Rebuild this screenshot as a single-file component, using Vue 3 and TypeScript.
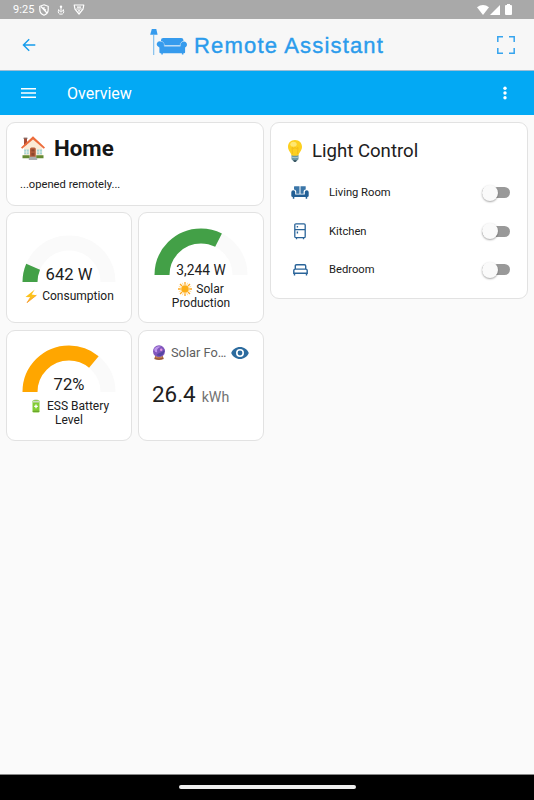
<script setup lang="ts">
interface Gauge {
  id: string
  value: string
  label: string[]
  percent: number
  color: string
}

interface Light {
  name: string
  icon: 'sofa' | 'fridge' | 'bed'
}

const gauges: Gauge[] = [
  { id: 'consumption', value: '642 W', label: ['Consumption'], percent: 12.84, color: '#43a047' },
  { id: 'solar', value: '3,244 W', label: ['Solar', 'Production'], percent: 64.88, color: '#43a047' },
  { id: 'battery', value: '72%', label: ['ESS Battery', 'Level'], percent: 72, color: '#ffa600' },
]

const lights: Light[] = [
  { name: 'Living Room', icon: 'sofa' },
  { name: 'Kitchen', icon: 'fridge' },
  { name: 'Bedroom', icon: 'bed' },
]
</script>

<template>
  <div class="screen">
    <div class="status">
      <span class="time">9:25</span>
      <svg class="st-shield" viewBox="0 0 10 12"><path d="M5 .8 9.2 2.3V5.5C9.2 8.4 7.3 10.4 5 11.2 2.700 10.4.8 8.4.8 5.5V2.3Z" fill="none" stroke="#fff" stroke-width="1.2" /><path d="M2 2.500 8 9M5 3v2.200l2 .8" fill="none" stroke="#fff" stroke-width="1.2" /></svg>
      <svg class="st-dl" viewBox="0 0 8 10"><circle cx="4" cy="1.800" r="1.200" fill="#fff" /><path d="M4 2v4M1.700 4.400Q.2 9.200 4 9.200T6.300 4.400M1.500 5 4 7.200 6.500 5" fill="none" stroke="#fff" stroke-width="1" /></svg>
      <svg class="st-tri" viewBox="0 0 12 11"><path d="M1.200 1H10.800L10 5.200 6 10 2 5.200Z" fill="none" stroke="#fff" stroke-width="1.200" stroke-linejoin="round" /><path d="M4 3.200h4M3.200 5h5.600M5 6.800h2" stroke="#fff" stroke-width="1.200" /></svg>
      <span class="grow"></span>
      <svg class="st-wifi" viewBox="0 0 12 10"><path d="M0 2.200Q6-2.200 12 2.200L6 10Z" fill="#fff" /></svg>
      <svg class="st-cell" viewBox="0 0 10 10"><path d="M10 0V10H0Z" fill="#fff" /></svg>
      <svg class="st-batt" viewBox="0 0 7 11"><path d="M2 0h3v1h1q1 0 1 1v8q0 1-1 1H1q-1 0-1-1V2q0-1 1-1h1Z" fill="#fff" /></svg>
    </div>

    <header class="brandbar">
      <svg class="back" viewBox="0 0 14 14"><path d="M13.300 7H1.500M7.200 1.200 1.400 7l5.800 5.800" fill="none" stroke="#159cec" stroke-width="1.400" /></svg>
      <div class="brand">
        <svg class="logo" viewBox="0 0 38 27">
          <path d="M1.800 0h4.500l1.300 5.800H.2Z" fill="#369bed" />
          <path d="M3.700 6v20" stroke="#79bbed" stroke-width="1.100" />
          <path d="M11 12.300V11q0-2 2.200-2h18q2.200 0 2.200 2v1.300q-3 .3-3 3.400v.5h-16.300v-.5q0-3.100-3.100-3.400Z" fill="#369bed" />
          <path d="M14.300 17.300h16V15.200q1-2.700 3.900-2.600 3.300.8 2.700 4-.6 1.500-1.800 1.800v4.800q0 1.100-1.100 1.100h-.6v1.200h-1.500v-1.200H12.800v1.200h-1.500v-1.200h-.7q-1.200 0-1.200-1.100v-4.800Q6.300 17 6.800 14.600q.8-2.700 4-2.200 2.500.3 3.500 2.700Z" fill="#369bed" />
          <path d="M14.300 14.500v2.600h16v-2.600" fill="none" stroke="#a5d2f6" stroke-width=".7" />
        </svg>
        <span class="brand-name">Remote Assistant</span>
      </div>
      <svg class="full" viewBox="0 0 18 18"><path d="M.8 6V.8H6M12 .8h5.200V6M17.200 12v5.200H12M6 17.200H.8V12" fill="none" stroke="#36a4ee" stroke-width="1.500" /></svg>
    </header>

    <nav class="toolbar">
      <svg class="menu" viewBox="0 0 15 10"><path d="M0 .8h15M0 5h15M0 9.200h15" stroke="#fff" stroke-width="1.500" /></svg>
      <span class="view">Overview</span>
      <svg class="dots" viewBox="0 0 4 14"><circle cx="2" cy="2.200" r="1.700" fill="#fff" /><circle cx="2" cy="7" r="1.700" fill="#fff" /><circle cx="2" cy="11.800" r="1.700" fill="#fff" /></svg>
    </nav>

    <main class="columns">
      <section class="left">
        <article class="card home">
          <h1>
            <svg class="house" viewBox="0 0 24 24">
              <path d="M3 2.200h3v7H3Z" fill="#a84b35" /><path d="M2.600 1.600h3.800V3H2.600Z" fill="#8a6760" />
              <path d="M3 11.500 12 3l9.300 8.500V22H3Z" fill="#fbead6" />
              <path d="M12 .2 24 11.500l-1.200 1.300L12 3.500 1.200 12.800 0 11.500Z" fill="#ed6c3b" />
              <path d="M3.200 13.500h4.600v4.800H3.200ZM16 13.500h5v4.800h-5Z" fill="#a4d5d5" />
              <path d="M5.500 13.500v4.800M3.200 16h4.600M18.500 13.500v4.800M16 16h5" stroke="#f4f1e5" stroke-width=".7" />
              <path d="M9 21v-8q0-1.600 1.500-1.600h2.800q1.500 0 1.500 1.600v8Z" fill="#b65f3d" />
              <path d="M10.400 13.200h3v2.400h-3ZM10.400 16.800h3v3h-3Z" fill="#8e472f" />
              <path d="M1.500 19.300h7.200v2.900H1.500ZM15.200 19.300h7.300v2.900h-7.300Z" fill="#648a32" />
              <path d="M8.800 20.700h6.400v1.400h1v1.900H7.800v-1.900h1Z" fill="#a9adb0" />
            </svg>
            <span>Home</span>
          </h1>
          <p>...opened remotely...</p>
        </article>

        <div class="grid">
          <article v-for="g in gauges" :key="g.id" class="card gauge-card" :class="g.id">
            <div class="gauge">
              <svg class="dial" viewBox="0 0 94 47">
                <path d="M8 47A39 39 0 0 1 86 47" fill="none" stroke="#fafafa" stroke-width="15" />
                <path d="M8 47A39 39 0 0 1 86 47" fill="none" :stroke="g.color" stroke-width="15" pathLength="100" :stroke-dasharray="`${g.percent} 200`" />
              </svg>
              <span class="value">{{ g.value }}</span>
            </div>
            <div class="label">
              <div v-for="(line, i) in g.label" :key="line" class="line">
                <template v-if="i === 0">
                  <svg v-if="g.id === 'consumption'" class="emoji" viewBox="0 0 14 14"><path d="M10.800.5 1.500 8l5 .3L3 13.700 12.500 6.200l-4.800-.6Z" fill="#fcc21b" /><path d="M6.500 8.300 3 13.700 12.500 6.200" fill="none" stroke="#f79422" stroke-width=".7" /></svg>
                  <svg v-else-if="g.id === 'solar'" class="emoji" viewBox="0 0 14 14"><path d="M7 0v14M0 7h14M2 2l10 10M12 2 2 12" stroke="#ffa81f" stroke-width="1.300" /><path d="M4.300.8l5.400 12.400M9.700.8 4.300 13.200M.8 4.300l12.400 5.400M13.200 4.300.8 9.700" stroke="#ffc95c" stroke-width=".6" /><circle cx="7" cy="7" r="4.300" fill="#fff" /><circle cx="7" cy="7" r="3.800" fill="#fcae18" /></svg>
                  <svg v-else class="emoji" viewBox="0 0 14 14"><path d="M5.300.6h3.400v1.200H5.300Z" fill="#b8bfb7" /><rect x="3.500" y="1.300" width="7" height="12.200" rx="1.200" fill="#83cd35" /><path d="M4 2h6v1.500H4Z" fill="#cdd7c4" /><path d="M3.800 11.800h6.400v1H3.800Z" fill="#659b2c" /><path d="M7 5.600v3.600M5.200 7.400h3.600" stroke="#fff" stroke-width="1.300" /></svg>
                </template>
                <span>{{ line }}</span>
              </div>
            </div>
          </article>

          <article class="card forecast">
            <div class="fc-head">
              <svg class="orb" viewBox="0 0 14 15"><circle cx="7" cy="6.300" r="6" fill="#8056bd" /><path d="M2.200 3.800Q5-.1 9 1.800 3.800 3.800 5.300 7 2.400 8 2.200 3.800Z" fill="#bd95ea" /><path d="M7 8q4.200-.4 5.300-4 .8 4.900-3 6.700Q6.200 11.400 4.500 10Z" fill="#5646a2" /><circle cx="9.200" cy="4.800" r="1.200" fill="#e79be1" /><path d="M3.200 11q3.800 2 7.600 0l1 3q-4.800 1.800-9.600 0Z" fill="#9b5838" /><path d="M3.500 12.200q3.500 1.500 7 0" fill="none" stroke="#dc985d" stroke-width=".7" /></svg>
              <span class="fc-title">Solar Fo…</span>
              <svg class="eye" viewBox="1 4.500 22 15"><path d="M12 9a3 3 0 0 0-3 3 3 3 0 0 0 3 3 3 3 0 0 0 3-3 3 3 0 0 0-3-3m0 8a5 5 0 0 1-5-5 5 5 0 0 1 5-5 5 5 0 0 1 5 5 5 5 0 0 1-5 5m0-12.500C7 4.500 2.730 7.610 1 12c1.730 4.390 6 7.500 11 7.500s9.270-3.110 11-7.500c-1.730-4.390-6-7.500-11-7.500Z" fill="#2c6b9e" /></svg>
            </div>
            <div class="fc-value"><span class="number">26.4</span><span class="unit">kWh</span></div>
          </article>
        </div>
      </section>

      <section class="card lights">
        <h2>
          <svg class="bulb" viewBox="0 0 16 22"><path d="M8 0C3.500 0 1 3 1 6.800c0 4 3 5.500 3.700 9.200h6.600C12 12.300 15 10.800 15 6.800 15 3 12.500 0 8 0Z" fill="#fdd020" /><path d="M5.500 14 5 7.500l1.700 1L8 7.500l1.300 1 1.700-1L10.500 14" fill="none" stroke="#efb31a" stroke-width=".7" /><ellipse cx="6.500" cy="4.300" rx="3.200" ry="2.500" fill="#ffe770" /><path d="M4.500 15.300q3.500 1 7 0v4L9.500 21.300h-3L4.500 19.300Z" fill="#6b98a4" /><path d="M4.500 17.200q3.500 1 7 0" fill="none" stroke="#a9c9d1" /><path d="M6.200 20h3.600l-.8 2H7Z" fill="#405d68" /></svg>
          <span>Light Control</span>
        </h2>
        <div v-for="light in lights" :key="light.name" class="row">
          <span class="icon">
            <svg v-if="light.icon === 'sofa'" class="sofa" viewBox="0 0 18 13"><path d="M3.300.3h5.200v7.500H5.200V5.300Q4.900 3.600 3 3.500V.9ZM9.500.3h5.200V3.500q-2 .2-2.100 1.800v2.500H9.500Z" fill="#3b76a8" /><path d="M2.300 4.300q1.900 0 1.900 2v2.200h9.600V6.300q0-2 1.900-2 2 0 2 2v3.500q0 1.200-1.500 1.200v1.700h-1.500V11H3.300v1.700H1.800V11Q.3 11 .3 9.800V6.300q0-2 2-2Z" fill="#225f95" /></svg>
            <svg v-else-if="light.icon === 'fridge'" class="fridge" viewBox="0 0 12 17"><path d="M2 .8h8q1.200 0 1.200 1.200v11.500q0 1.200-1.200 1.200H2Q.8 14.700.8 13.500V2Q.8.8 2 .8ZM.8 6.700h10.400M2.500 14.800v1.500M9.500 14.800v1.500" fill="none" stroke="#2a6499" stroke-width="1.300" /><path d="M3.400 3v1.600M3.400 8.600v2" stroke="#2a6499" stroke-width="1.400" /></svg>
            <svg v-else class="bed" viewBox="0 0 15 12"><path d="M2.300 5V2q0-1.200 1.200-1.200h8q1.200 0 1.200 1.200v3M.8 9.200V6.500Q.8 5.100 2.200 5.100h10.600q1.400 0 1.400 1.400v2.700ZM1.500 9.200v2.200M13.500 9.200v2.200" fill="none" stroke="#2a6499" stroke-width="1.400" /></svg>
          </span>
          <span class="name">{{ light.name }}</span>
          <span class="switch"><span class="thumb"></span></span>
        </div>
      </section>
    </main>

    <footer class="navbar"><span class="pill"></span></footer>
  </div>
</template>

<style>
body { margin: 0; background: #fafafa; }
</style>

<style scoped>
* { box-sizing: border-box; }
svg { display: block; flex: none; }
h1, h2, p { margin: 0; }
.screen { width: 534px; height: 800px; display: flex; flex-direction: column; background: #fafafa; color: #202020; font-family: Roboto, sans-serif; font-weight: 400; overflow: hidden; }
.status { height: 19px; flex: none; background: #a9a9a9; display: flex; align-items: center; padding: 0 22px 0 13px; color: #fff; }
.time { font-size: 11px; letter-spacing: .1px; width: 26px; white-space: nowrap; }
.st-shield { width: 10px; height: 12px; }
.st-dl { width: 8px; height: 10px; margin-left: 8px; }
.st-tri { width: 12px; height: 11px; margin-left: 8px; }
.grow { flex: 1; }
.st-wifi { width: 12px; height: 10px; }
.st-cell { width: 10px; height: 10px; margin-left: 1px; }
.st-batt { width: 7px; height: 11px; margin-left: 5px; }
.brandbar { height: 52px; flex: none; background: #f7f7f7; border-bottom: 1px solid #9dbdd5; display: flex; align-items: center; justify-content: space-between; padding: 0 19px 0 22px; }
.back { width: 14px; height: 14px; }
.brand { display: flex; align-items: center; }
.logo { width: 38px; height: 27px; margin-top: -4px; }
.brand-name { width: 189px; margin-left: 6px; padding-top: 2px; font: 22px/26px "Liberation Sans", sans-serif; letter-spacing: 1.180px; color: #2b9cec; -webkit-text-stroke: .4px #2b9cec; white-space: nowrap; }
.full { width: 18px; height: 18px; }
.toolbar { height: 44px; flex: none; background: #03a9f4; display: flex; align-items: center; padding: 0 27px 0 21px; color: #fff; }
.menu { width: 15px; height: 10px; }
.view { flex: 1; margin-left: 31px; font-size: 16px; }
.dots { width: 4px; height: 14px; }
.columns { flex: 1; display: flex; align-items: flex-start; gap: 6px; padding: 7px 6px 0; }
.left { width: 258px; }
.card { background: #fff; border: 1px solid #e2e2e2; border-radius: 9px; }
.home { height: 84px; padding: 12px 13px 0 14px; }
.home h1 { display: flex; align-items: center; height: 26px; gap: 9px; font-size: 22.300px; font-weight: 700; color: #151515; }
.house { width: 24px; height: 24px; }
.home p { margin: 17px 0 0 -1px; font-size: 11.200px; line-height: 13px; }
.grid { display: grid; grid-template-columns: 126px 126px; grid-auto-rows: 111px; gap: 7px 6px; margin-top: 6px; }
.gauge-card { display: flex; flex-direction: column; align-items: center; justify-content: center; padding-top: 3px; }
.gauge-card.battery { padding-top: 1px; }
.gauge { width: 94px; height: 50px; display: grid; }
.dial { width: 94px; height: 47px; grid-area: 1 / 1; }
.value { grid-area: 1 / 1; align-self: end; justify-self: center; font-size: 16.600px; line-height: 20px; white-space: nowrap; }
.solar .value { font-size: 13.800px; line-height: 16px; }
.label { margin-top: 4px; font-size: 12px; line-height: 14px; }
.line { display: flex; justify-content: center; align-items: center; gap: 4px; white-space: nowrap; }
.emoji { width: 14px; height: 14px; }
.forecast { padding: 13px 13px 0; }
.fc-head { display: flex; align-items: center; height: 17px; color: #606060; }
.orb { width: 14px; height: 15px; }
.fc-title { width: 56px; margin: 0 4px 0 5px; font-size: 12.800px; white-space: nowrap; }
.eye { width: 18px; height: 12px; }
.fc-value { display: flex; align-items: baseline; gap: 6px; margin-top: 19px; line-height: 28px; }
.number { font-size: 22.400px; }
.unit { font-size: 14.200px; color: #727272; }
.lights { flex: 1; height: 177px; padding: 12px 17px 0 16px; }
.lights h2 { display: flex; align-items: center; gap: 9px; height: 31px; font-size: 18.600px; font-weight: 400; }
.bulb { width: 16px; height: 22px; }
.row { height: 38.500px; display: flex; align-items: center; }
.row:first-of-type { margin-top: 7.500px; }
.icon { width: 26px; display: flex; justify-content: center; }
.sofa { width: 18px; height: 13px; }
.fridge { width: 12px; height: 17px; }
.bed { width: 15px; height: 12px; }
.name { flex: 1; margin-left: 16px; font-size: 11.200px; }
.switch { width: 28px; height: 11px; border-radius: 6px; background: #999; display: flex; align-items: center; }
.thumb { width: 16px; height: 16px; flex: none; margin-left: -.5px; border-radius: 50%; background: #fafafa; box-shadow: 0 1px 2px rgba(0, 0, 0, .35); }
.navbar { height: 26px; flex: none; background: #000; border-top: 1px solid #888; display: flex; align-items: center; justify-content: center; }
.pill { width: 177px; height: 4px; margin-top: -2px; border-radius: 2px; background: #eee; }
</style>
